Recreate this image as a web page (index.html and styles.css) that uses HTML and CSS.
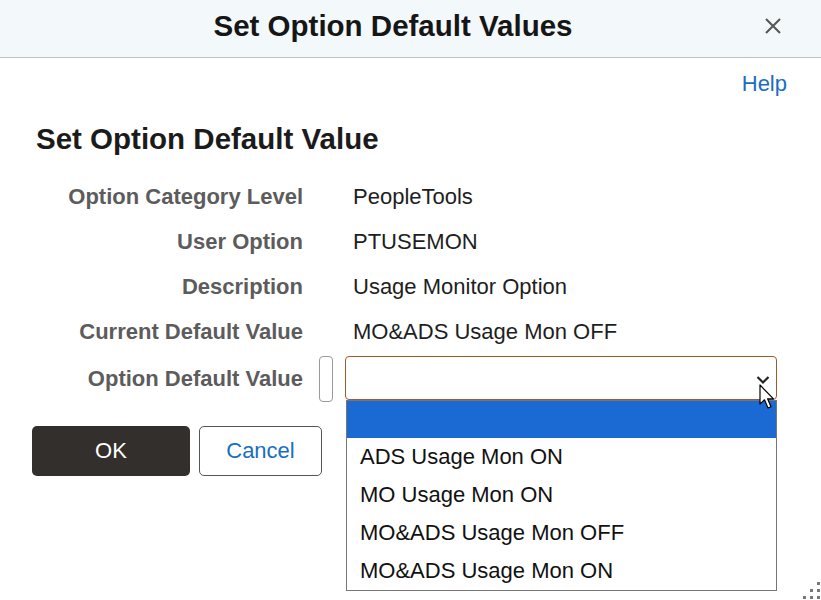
FILE: index.html
```html
<!DOCTYPE html>
<html lang="en">
<head>
    <meta charset="UTF-8">
    <meta name="viewport" content="width=device-width, initial-scale=1.0">
    <title>Set Option Default Values</title>
    <link rel="stylesheet" href="styles.css">
</head>
<body>

<div class="modal">
    <!-- header -->
    <div class="modal-header">
        <h1 class="modal-title">Set Option Default Values</h1>
        <button class="close-btn" aria-label="Close">
            <svg width="18" height="18" viewBox="0 0 18 18">
                <path d="M2 2 L16 16 M16 2 L2 16" stroke="#555" stroke-width="2" fill="none"/>
            </svg>
        </button>
    </div>

    <div class="modal-body">
        <div class="help-row">
            <a href="#" class="help-link">Help</a>
        </div>

        <h2 class="page-heading">Set Option Default Value</h2>

        <div class="form-grid">
            <div class="form-label">Option Category Level</div>
            <div class="form-value">PeopleTools</div>

            <div class="form-label">User Option</div>
            <div class="form-value">PTUSEMON</div>

            <div class="form-label">Description</div>
            <div class="form-value">Usage Monitor Option</div>

            <div class="form-label">Current Default Value</div>
            <div class="form-value">MO&amp;ADS Usage Mon OFF</div>

            <div class="form-label">Option Default Value</div>
            <div class="select-cell">
                <span class="prompt-box"></span>
                <div class="select-wrap">
                    <div class="select-box">
                        <svg class="chevron" width="14" height="10" viewBox="0 0 14 10">
                            <path d="M1.5 2 L7 7.5 L12.5 2" stroke="#222" stroke-width="2.2" fill="none"/>
                        </svg>
                    </div>
                    <ul class="option-list">
                        <li class="selected">&nbsp;</li>
                        <li>ADS Usage Mon ON</li>
                        <li>MO Usage Mon ON</li>
                        <li>MO&amp;ADS Usage Mon OFF</li>
                        <li>MO&amp;ADS Usage Mon ON</li>
                    </ul>
                    <!-- mouse pointer -->
                    <svg class="cursor" width="18" height="27" viewBox="0 0 18 27">
                        <path d="M1 1 L1 20 L5.5 15.8 L9 24 L12 22.7 L8.6 14.8 L14.5 14.8 Z" fill="#fff" stroke="#000" stroke-width="1.2" stroke-linejoin="round"/>
                    </svg>
                </div>
            </div>
        </div>

        <div class="button-row">
            <button class="btn btn-primary">OK</button>
            <button class="btn btn-secondary">Cancel</button>
        </div>
    </div>

    <div class="resize-grip">
        <span></span><span></span><span></span>
        <span></span><span></span><span></span>
    </div>
</div>

</body>
</html>
```

FILE: styles.css
```css
body {
    margin: 0;
    font-family: "Liberation Sans", Arial, sans-serif;
    background-color: #fff;
    color: #1b1b1b;
}

.modal {
    position: relative;
    width: 821px;
    height: 600px;
    overflow: hidden;
}

/* header */
.modal-header {
    position: relative;
    height: 57px;
    background-color: #f3f8fb;
    border-bottom: 1px solid #c2c2c2;
    display: flex;
    align-items: center;
    padding-right: 35px;
}

.modal-title {
    flex: 1;
    margin: 0;
    text-align: center;
    font-size: 29.5px;
    font-weight: bold;
    color: #161616;
    line-height: 34px;
    padding-bottom: 6px;
}

.close-btn {
    position: absolute;
    right: 39px;
    top: 17px;
    width: 18px;
    height: 18px;
    padding: 0;
    border: none;
    background: none;
    cursor: pointer;
}

/* body */
.modal-body {
    padding: 0 34px 0 32px;
}

.help-row {
    display: flex;
    justify-content: flex-end;
    padding-top: 13px;
}

.help-link {
    font-size: 22px;
    line-height: 25px;
    color: #1a6ec0;
    text-decoration: none;
}

.page-heading {
    margin: 26px 0 0 4px;
    font-size: 29.5px;
    line-height: 34px;
    font-weight: bold;
    color: #1b1b1b;
}

.form-grid {
    display: grid;
    grid-template-columns: 271px 1fr;
    column-gap: 16px;
    margin-top: 18px;
    align-items: center;
}

.form-label {
    height: 45px;
    line-height: 45px;
    text-align: right;
    font-size: 22px;
    font-weight: bold;
    color: #5c5c5c;
}

.form-value {
    height: 45px;
    line-height: 45px;
    padding-left: 34px;
    font-size: 22px;
    color: #1e1e1e;
}

.select-cell {
    display: flex;
    align-items: center;
    gap: 12px;
}

.prompt-box {
    width: 12px;
    height: 44px;
    border: 1px solid #9a9a9a;
    border-radius: 4px;
    margin-top: 2px;
}

.select-wrap {
    position: relative;
}

.select-box {
    width: 430px;
    height: 42px;
    border: 1px solid #a0592f;
    border-radius: 4px;
    background-color: #fff;
    display: flex;
    align-items: center;
    justify-content: flex-end;
}

.chevron {
    margin-right: 6px;
    margin-top: 4px;
}

.option-list {
    position: absolute;
    top: 44px;
    left: 1px;
    width: 429px;
    margin: 0;
    padding: 0;
    list-style: none;
    background-color: #fff;
    border: 1px solid #767676;
}

.option-list li {
    height: 38px;
    line-height: 38px;
    padding-left: 13px;
    font-size: 22px;
    color: #111;
}

.option-list li.selected {
    background-color: #1b69d3;
    height: 37px;
}

.cursor {
    position: absolute;
    left: 414px;
    top: 28px;
}

.button-row {
    display: flex;
    gap: 9px;
    margin-top: 24px;
}

.btn {
    height: 50px;
    font-family: "Liberation Sans", Arial, sans-serif;
    font-size: 22px;
    border-radius: 5px;
    cursor: pointer;
}

.btn-primary {
    width: 158px;
    background-color: #322f2c;
    color: #fff;
    border: none;
}

.btn-secondary {
    width: 123px;
    background-color: #fff;
    color: #1a6ec0;
    border: 1px solid #555;
}

.resize-grip {
    position: absolute;
    right: 1px;
    bottom: 1px;
    width: 18px;
    height: 18px;
    display: grid;
    grid-template-columns: repeat(3, 3px);
    grid-template-rows: repeat(3, 3px);
    gap: 4px;
    justify-content: end;
    align-content: end;
}

.resize-grip span {
    background-color: #777;
}

.resize-grip span:nth-child(1) {
    grid-column: 3;
    grid-row: 1;
}

.resize-grip span:nth-child(2) {
    grid-column: 2;
    grid-row: 2;
}

.resize-grip span:nth-child(3) {
    grid-column: 3;
    grid-row: 2;
}

.resize-grip span:nth-child(4) {
    grid-column: 1;
    grid-row: 3;
}

.resize-grip span:nth-child(5) {
    grid-column: 2;
    grid-row: 3;
}

.resize-grip span:nth-child(6) {
    grid-column: 3;
    grid-row: 3;
}
```
